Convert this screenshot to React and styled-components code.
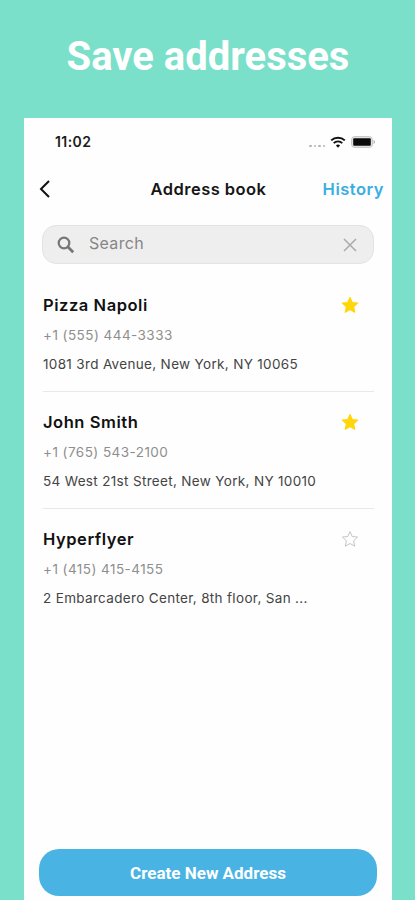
import React, { useState } from "react";
import styled, { createGlobalStyle } from "styled-components";

const ADDRESSES = [
  {
    id: 1,
    name: "Pizza Napoli",
    phone: "+1 (555) 444-3333",
    address: "1081 3rd Avenue, New York, NY 10065",
    favorite: true,
  },
  {
    id: 2,
    name: "John Smith",
    phone: "+1 (765) 543-2100",
    address: "54 West 21st Street, New York, NY 10010",
    favorite: true,
  },
  {
    id: 3,
    name: "Hyperflyer",
    phone: "+1 (415) 415-4155",
    address: "2 Embarcadero Center, 8th floor, San ...",
    favorite: false,
  },
];

const STAR_PATH =
  "M9 1.6 L11.2 6.5 L16.6 7.1 L12.6 10.8 L13.7 16.2 L9 13.5 L4.3 16.2 L5.4 10.8 L1.4 7.1 L6.8 6.5 Z";

function WifiIcon() {
  return (
    <svg width="16" height="12" viewBox="0 0 16 12" fill="none">
      <path d="M1.2 4.4 a9.8 9.8 0 0 1 13.6 0" stroke="#111" strokeWidth="2" />
      <path d="M3.7 7.1 a6.1 6.1 0 0 1 8.6 0" stroke="#111" strokeWidth="1.8" />
      <path d="M8 11.8 L5.9 9.6 a3 3 0 0 1 4.2 0 Z" fill="#111" />
    </svg>
  );
}

function BatteryIcon() {
  return (
    <svg width="25" height="12" viewBox="0 0 25 12">
      <rect x="0.6" y="0.6" width="20.8" height="10.8" rx="3" fill="#e4e4e4" stroke="#c4c4c4" />
      <rect x="2.2" y="2.2" width="17.6" height="7.6" rx="1" fill="#0a0a0a" />
      <path d="M22.6 4 a2.2 2.2 0 0 1 0 4 Z" fill="#a6a6a6" />
    </svg>
  );
}

function BackIcon() {
  return (
    <svg width="12" height="20" viewBox="0 0 12 20" fill="none">
      <path d="M10 2 L2 10 L10 18" stroke="#111" strokeWidth="2" />
    </svg>
  );
}

function SearchIcon() {
  return (
    <svg width="18" height="18" viewBox="0 0 18 18" fill="none">
      <circle cx="7" cy="7" r="5.3" stroke="#757575" strokeWidth="2.2" />
      <path d="M11 11 L16.2 16.2" stroke="#757575" strokeWidth="2.8" />
    </svg>
  );
}

function ClearIcon() {
  return (
    <svg width="14" height="14" viewBox="0 0 14 14" fill="none">
      <path d="M1 1 L13 13 M13 1 L1 13" stroke="#aaa" strokeWidth="1.5" />
    </svg>
  );
}

function StarIcon({ filled }) {
  return (
    <svg width="18" height="18" viewBox="0 0 18 18">
      <path
        d={STAR_PATH}
        fill={filled ? "#ffd60a" : "none"}
        stroke={filled ? "#ffd60a" : "#c4c4c4"}
        strokeWidth={filled ? 1.2 : 1}
        strokeLinejoin="round"
      />
    </svg>
  );
}

function App() {
  const [entries, setEntries] = useState(ADDRESSES);
  const [query, setQuery] = useState("");

  const toggleFavorite = (id) => {
    setEntries(
      entries.map((entry) =>
        entry.id === id ? { ...entry, favorite: !entry.favorite } : entry
      )
    );
  };

  const visible = entries.filter((entry) =>
    entry.name.toLowerCase().includes(query.toLowerCase())
  );

  return (
    <Page>
      <GlobalStyle />
      <Headline>Save addresses</Headline>

      <Phone>
        <StatusBar>
          <Clock>11:02</Clock>
          <StatusIcons>
            <SignalDots>
              <Dot />
              <Dot />
              <Dot />
              <Dot />
            </SignalDots>
            <WifiIcon />
            <BatteryIcon />
          </StatusIcons>
        </StatusBar>

        <NavBar>
          <IconButton aria-label="Back">
            <BackIcon />
          </IconButton>
          <NavTitle>Address book</NavTitle>
          <HistoryLink>History</HistoryLink>
        </NavBar>

        <SearchBox>
          <SearchIcon />
          <SearchInput
            placeholder="Search"
            value={query}
            onChange={(e) => setQuery(e.target.value)}
          />
          <IconButton aria-label="Clear" onClick={() => setQuery("")}>
            <ClearIcon />
          </IconButton>
        </SearchBox>

        <AddressList>
          {visible.map((entry) => (
            <AddressItem key={entry.id}>
              <ItemHeader>
                <Name>{entry.name}</Name>
                <IconButton
                  aria-label="Favorite"
                  onClick={() => toggleFavorite(entry.id)}
                >
                  <StarIcon filled={entry.favorite} />
                </IconButton>
              </ItemHeader>
              <PhoneNumber>{entry.phone}</PhoneNumber>
              <Street>{entry.address}</Street>
            </AddressItem>
          ))}
        </AddressList>

        <CreateButton>Create New Address</CreateButton>
      </Phone>
    </Page>
  );
}

const GlobalStyle = createGlobalStyle`
  * {
    box-sizing: border-box;
  }

  body {
    margin: 0;
    background: #7ae0ca;
  }
`;

const Page = styled.div`
  display: flex;
  flex-direction: column;
  height: 900px;
  overflow: hidden;
  background: #7ae0ca;
  font-family: Inter, "Liberation Sans", sans-serif;
`;

const Headline = styled.h1`
  flex: none;
  height: 118px;
  margin: 0;
  padding: 33px 0 0 1px;
  font-family: Roboto, sans-serif;
  font-size: 40px;
  font-weight: 700;
  line-height: 48px;
  text-align: center;
  color: #fff;
`;

const Phone = styled.main`
  display: flex;
  flex: 1;
  flex-direction: column;
  margin: 0 23px 0 24px;
  background: #fefefe;
`;

const StatusBar = styled.div`
  display: flex;
  align-items: center;
  justify-content: space-between;
  height: 47px;
  padding: 0 16px 0 31px;
`;

const Clock = styled.span`
  font-size: 14px;
  font-weight: 600;
  letter-spacing: 0.4px;
  color: #1a1a1a;
`;

const StatusIcons = styled.div`
  display: flex;
  align-items: center;
  gap: 5px;
`;

const SignalDots = styled.div`
  display: flex;
  gap: 2px;
  padding-top: 9px;
`;

const Dot = styled.span`
  width: 2.5px;
  height: 2.5px;
  border-radius: 50%;
  background: #b5b5b5;
`;

const NavBar = styled.header`
  display: grid;
  grid-template-columns: 74px 1fr 80px;
  align-items: center;
  height: 48px;
  padding: 0 8px 0 15px;
`;

const IconButton = styled.button`
  display: flex;
  padding: 0;
  border: none;
  background: none;
  cursor: pointer;
`;

const NavTitle = styled.h2`
  margin: 0;
  font-size: 16.5px;
  font-weight: 600;
  letter-spacing: 0.45px;
  text-align: center;
  white-space: nowrap;
  color: #161616;
`;

const HistoryLink = styled.a`
  font-size: 16.5px;
  font-weight: 600;
  letter-spacing: 0.5px;
  text-align: right;
  color: #3aaee0;
`;

const SearchBox = styled.div`
  display: flex;
  align-items: center;
  height: 39px;
  margin: 12px 18px 0 18px;
  padding: 0 16px 0 14px;
  border: 1px solid #e3e3e3;
  border-radius: 14px;
  background: #eee;
`;

const SearchInput = styled.input`
  flex: 1;
  min-width: 0;
  padding: 0 0 3px 14px;
  border: none;
  outline: none;
  background: none;
  font-family: inherit;
  font-size: 16px;
  letter-spacing: 0.3px;
  color: #222;

  &::placeholder {
    color: #868686;
  }
`;

const AddressList = styled.ul`
  flex: 1;
  margin: 0;
  padding: 11px 18px 0 19px;
  list-style: none;
`;

const AddressItem = styled.li`
  height: 117px;
  padding-top: 17px;
  border-bottom: 1px solid #e8e8e8;

  &:last-child {
    border-bottom: none;
  }
`;

const ItemHeader = styled.div`
  display: flex;
  align-items: center;
  justify-content: space-between;
  height: 26px;
  padding-right: 15px;
`;

const Name = styled.h3`
  margin: 0;
  font-size: 16.5px;
  font-weight: 600;
  letter-spacing: 0.55px;
  color: #111;
`;

const PhoneNumber = styled.p`
  margin: 7px 0 0;
  font-size: 13.5px;
  line-height: 20px;
  letter-spacing: 0.45px;
  color: #8e8e8e;
`;

const Street = styled.p`
  margin: 9px 0 0;
  font-size: 13.5px;
  line-height: 20px;
  letter-spacing: 0.33px;
  white-space: nowrap;
  color: #444;
`;

const CreateButton = styled.button`
  flex: none;
  height: 47px;
  margin: 0 15px 4px;
  border: none;
  border-radius: 20px;
  background: #49b4e4;
  font-family: Roboto, sans-serif;
  font-size: 17px;
  font-weight: 700;
  color: #fff;
  cursor: pointer;
`;

export default App;
